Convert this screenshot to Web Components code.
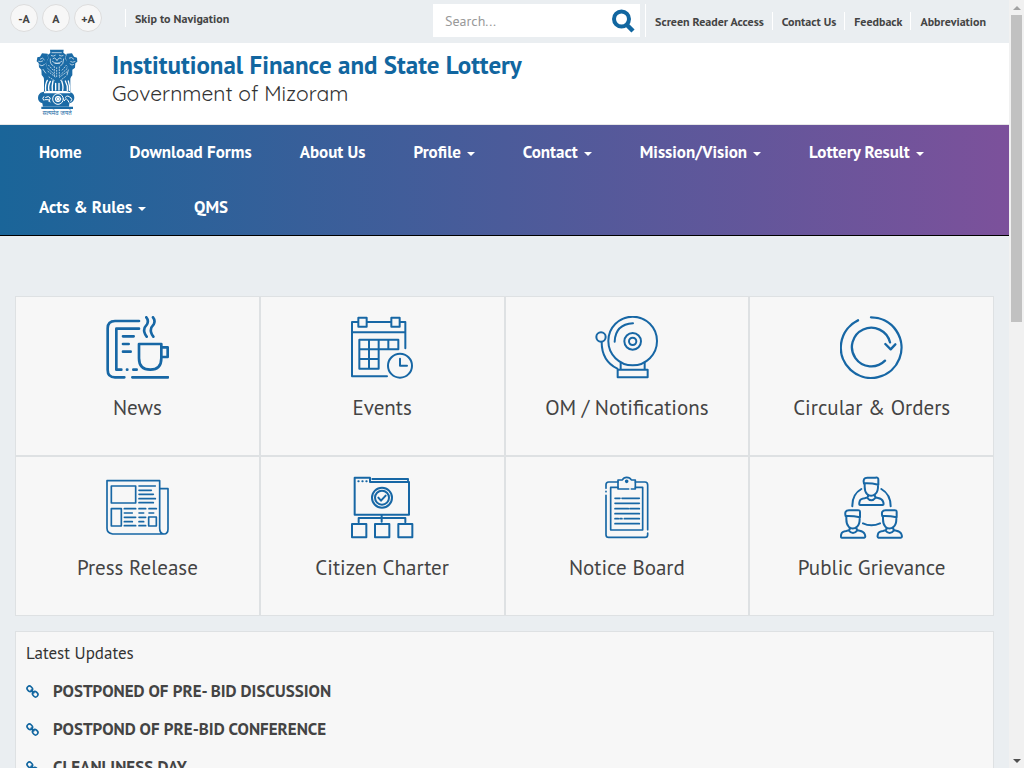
<!DOCTYPE html>
<html lang="en">
<head>
<meta charset="utf-8">
<meta name="viewport" content="width=device-width, initial-scale=1">
<title>Institutional Finance and State Lottery</title>
<style>
body{margin:0;font-family:"PT Sans",Lato,"Liberation Sans",sans-serif;color:#444;background:#eaeef1}
</style>
</head>
<body>
<site-page></site-page>
<script>
const define=(name,html,setup)=>customElements.define(name,class extends HTMLElement{
  constructor(){
    super();
    const t=document.createElement('template');
    t.innerHTML=html;
    this.attachShadow({mode:'open'}).append(t.content.cloneNode(true));
  }
  connectedCallback(){ if(setup) setup(this,this.shadowRoot); }
});

const icons={
news:['48 33 189 189',8,'<path d="M147 48H75Q53 48 53 70V195Q53 217 75 217H103M127 217H234M147 71H79V194H94M111 194h1M130 194H140M99 94h32M99 117h17M99 140h23M147 117H214V160Q214 194 181 194Q147 194 147 160ZM214 127H233V156H214M169 37Q177 47 171 58Q160 69 163 81Q165 89 170 95M189 37Q197 47 191 58Q180 69 183 81Q185 89 190 95"/>'],
events:['48 33 189 189',6,'<path d="M70 51H51V214H156M95 51H169M194 51H211V130M51 82H211M70 38H95V65H70ZM169 38H194V65H169ZM73 104H190V133H73ZM73 133V191H131V104M73 162H131M102 104V191M160 104V133"/><circle cx="195" cy="182" r="36"/><path d="M195 161V182H216"/>'],
bell:['46 33 189 189',6,'<circle cx="159" cy="108" r="73"/><circle cx="159" cy="109" r="25"/><circle cx="159" cy="109" r="11"/><circle cx="64" cy="96" r="14"/><path d="M105 110Q107 58 160 55M66 111Q66 168 113 191M123 173V193M195 173V193M114 194H204V217H114Z"/>'],
orders:['45 33 189 189',7,'<path d="M138 37A91 91 0 1 1 99 46M195 112A58 58 0 1 0 180 167M181 117L197 133L211 118"/>'],
press:['48 33 189 189',5,'<path d="M51 47H209V190Q209 207 222 207H68Q51 205 51 190ZM209 71H234V192Q234 207 222 207M64 63H137V114H64ZM64 131H94V183H64ZM176 156H199V183H176Z"/><path d="M147 63h49M147 76h37M147 88h43M147 101h49M147 113h43M103 131h34M103 144h24M103 157h34M103 170h24M103 182h34M147 131h20M147 144h14M147 157h20M147 170h14M147 182h20M177 131h22M177 144h14"/>'],
charter:['48 33 189 189',6,'<path d="M59 38H105V51H222V149H59ZM112 42H219V46M51 177H94V217H51ZM120 177H163V217H120ZM190 177H232V217H190ZM140 149V170M71 172V159H211V172"/><circle cx="141" cy="98" r="30"/><circle cx="141" cy="98" r="21"/><path d="M130 98L138 107L152 92M70 49h1M82 49h1M94 49h1"/>'],
board:['46 33 189 189',5,'<path d="M115 51H87Q79 51 79 59V70M79 79V80M79 91V209Q79 217 87 217H196Q204 217 204 209V204M204 194V60Q204 51 196 51H167M115 67H93V195H189V67H167"/><path d="M147 72H115V45H128Q132 37 141 37Q151 37 155 45H167V72H155"/><circle cx="141" cy="49" r="3" fill="currentColor"/><path d="M106 100h15M127 100h52M106 115h73M106 131h40M151 131h28M106 146h73M106 161h10M121 161h6M134 161h45M106 176h73"/>'],
people:['45 33 189 189',6,'<defs><g id="p"><path d="M117 56Q112 38 127 38H151Q161 36 160 45V59Q138 54 119 55V65Q119 80 126 87Q138 98 151 87Q160 80 159 59M129 90V95Q128 98 119 100Q106 101 104 109Q101 120 105 120H173Q178 120 174 109Q171 101 159 99Q149 98 149 90M126 98Q139 114 152 98"/></g></defs><use href="#p"/><use href="#p" x="-55" y="98"/><use href="#p" x="55" y="98"/><path d="M109 72Q81 88 82 124M169 72Q197 88 197 124M114 175Q139 187 165 175"/>']
};

define('icon-mark',`<style>:host{display:block;width:63px;height:63px;color:#1767a5}svg{display:block;width:100%;height:100%}</style><svg fill="none" stroke="currentColor" stroke-linecap="round" stroke-linejoin="round" aria-hidden="true"></svg>`,(el,r)=>{
  const [box,w,body]=icons[el.getAttribute('name')],s=r.querySelector('svg');
  s.setAttribute('viewBox',box);s.setAttribute('stroke-width',w);s.innerHTML=body;
});

define('size-button',`<style>:host{display:block}button{width:28px;height:28px;padding:2px 0 0;border:1px solid #ddd;border-radius:50%;background:#f7f7f7;color:#444;font:bold 12px/16px "PT Sans",Lato,sans-serif}</style><button type="button"><slot></slot></button>`);

define('top-link',`<style>:host{display:block;height:18px;border-left:1px solid #fff;padding:0 8px 0 9px;font-size:12px;line-height:20px;font-weight:bold}a{color:#444;text-decoration:none;white-space:nowrap}</style><a href="#"><slot></slot></a>`);

define('search-box',`<style>:host{display:block;width:207px}form{display:flex;align-items:center;height:33px;background:#fff;padding:0 5px 0 12px}input{flex:1;min-width:0;border:0;padding:0;background:none;outline:0;font:14px/20px "PT Sans",Lato,sans-serif;color:#444}input::placeholder{color:#999;opacity:1}button{border:0;background:none;padding:0;width:24px;height:24px}svg{display:block}</style>
<form role="search"><input type="text" placeholder="Search..." aria-label="Search"><button type="button" aria-label="Search"><svg width="24" height="24" viewBox="0 0 24 24" fill="none" stroke="#1166a0"><circle cx="10.5" cy="10" r="7.5" stroke-width="4"/><path d="M16 16l6 6" stroke-width="4.5"/></svg></button></form>`);

define('top-bar',`<style>:host{display:flex;align-items:flex-start;justify-content:space-between;background:#eaeef1;padding:4px 15px 6px 10px}.l,.r{display:flex}.l{gap:4px}.l top-link{margin:5px 0 0 19px}.r{align-items:center}.r search-box{margin-right:5px}.first{border-left:1px solid #fff;align-self:stretch}.r .n{border-left:0}</style>
<div class="l"><size-button>-A</size-button><size-button>A</size-button><size-button>+A</size-button><top-link>Skip to Navigation</top-link></div>
<div class="r"><search-box></search-box><span class="first"></span><top-link class="n">Screen Reader Access</top-link><top-link>Contact Us</top-link><top-link>Feedback</top-link><top-link>Abbreviation</top-link></div>`);

define('state-emblem',`<style>:host{display:block;width:42px;height:67px}svg{display:block}</style>
<svg width="42" height="67" viewBox="0 0 126 201" role="img" aria-label="State emblem">
<g fill="#1b6ba6"><path d="M42 2H83L82 11L90 17L88 29L96 43L91 60L99 92L94 109H34L28 92L34 62L29 43L37 29L35 18L43 12ZM35 14L18 13L12 23L4 25L2 37L8 42L9 55L16 62L17 78L27 90L35 71L30 42L37 27ZM92 14L108 13L114 23L123 26L124 38L118 43L117 56L109 62L109 79L100 90L91 73L95 43L89 28Z"/>
<path d="M20 56h87l-4 36v41H24V92ZM20 129q-14 4-14 18q0 12 13 16l2 11h78l1-11q15-5 15-17q0-13-14-17l-10-3H31ZM16 173h95v7H16Z"/></g>
<g fill="none" stroke="#fff" stroke-width="2" stroke-linecap="round"><path d="M48 11h28M46 20q6 4 12-1m12 0q6 4 11 1M51 29q5-5 9 1l3 5l4-6q5-5 9 0M49 37q14 13 28 0M43 30q-2 16 8 20M83 30q0 16-9 21M57 43h14"/><path d="M13 30q7-7 12 2m-17 5q7 3 12-1m-9 12q7 6 14-1M100 27q7-5 13 3m-9 8q5 4 13 0m-15 7q6 6 11 2M21 61l8 11m68-9l-4 15"/>
<path stroke-dasharray="3 5" d="M38 49l14 15M35 58l18 16M36 67l22 17M91 49l-14 16M93 59l-18 17M92 69l-22 16M62 56v31M55 53v29M70 54v29M39 84l18 12M88 83l-17 13"/>
<path stroke-width="4" d="M34 94q-7 12-5 31M43 97q-8 15-4 28M51 96q-4 18-2 28M59 103v20M69 103v20M77 96q6 17 3 28M88 96q8 14 6 29M97 96q5 15 3 28"/>
<g stroke-width="3"><circle cx="66" cy="150" r="16"/><circle cx="66" cy="150" r="8"/><path d="M66 142v16M58 150h16M61 144l10 12M71 144l-10 12M23 143q-6 5 0 11m6-9q9-6 14 2l-4 10m-12-5h11l4 7M88 145q7-9 15 1m-18 9q4-10 10-2l4 7m5-15q7 6 1 12"/></g></g>
<text x="63" y="197" text-anchor="middle" fill="#1b6ba6" font-size="18" font-family="Noto Sans Devanagari, Noto Sans, sans-serif">सत्यमेव जयते</text></svg>`);

define('site-header',`<style>:host{display:flex;gap:34px;background:#fff;border-bottom:1px solid #e7e7e7;padding:6px 36px 8px}h1,p{margin:0}h1{font-size:25px;line-height:32px;color:#1166a0}p{font-family:Quicksand,Lato,sans-serif;font-size:21px;line-height:24px;color:#333;font-weight:400}</style>
<state-emblem></state-emblem><div><h1>Institutional Finance and State Lottery</h1><p>Government of Mizoram</p></div>`);

define('nav-item',`<style>:host{display:block}a{display:flex;align-items:center;gap:6px;padding:0 24px;font-size:17px;line-height:55px;font-weight:bold;color:#fff;text-decoration:none;white-space:nowrap}i{display:none;border:4px solid transparent;border-top-color:#fff;border-bottom:0;margin-top:3px}:host([menu]) i{display:block}</style><a href="#"><slot></slot><i></i></a>`);

define('main-nav',`<style>:host{display:block;background:linear-gradient(to right,#1a6599,#7c519b);border-bottom:1px solid #000}nav{display:flex;flex-wrap:wrap;padding:0 15px}</style>
<nav><nav-item>Home</nav-item><nav-item>Download Forms</nav-item><nav-item>About Us</nav-item><nav-item menu>Profile</nav-item><nav-item menu>Contact</nav-item><nav-item menu>Mission/Vision</nav-item><nav-item menu>Lottery Result</nav-item><nav-item menu>Acts &amp; Rules</nav-item><nav-item>QMS</nav-item></nav>`);

define('service-card',`<style>:host{display:block;background:#f7f7f7;border:1px solid #dee1e3}a{display:flex;flex-direction:column;align-items:center;gap:14px;padding:19px 0 32px;color:#444;text-decoration:none;font-size:21px;line-height:30px}</style><a href="#"><span><slot></slot></span></a>`,(el,r)=>{
  const mark=document.createElement('icon-mark');
  mark.setAttribute('name',el.getAttribute('icon'));
  r.querySelector('a').prepend(mark);
});

define('service-grid',`<style>:host{display:grid;grid-template-columns:repeat(4,minmax(0,1fr))}</style>
<service-card icon="news">News</service-card><service-card icon="events">Events</service-card><service-card icon="bell">OM / Notifications</service-card><service-card icon="orders">Circular &amp; Orders</service-card><service-card icon="press">Press Release</service-card><service-card icon="charter">Citizen Charter</service-card><service-card icon="board">Notice Board</service-card><service-card icon="people">Public Grievance</service-card>`);

define('update-item',`<style>:host{display:flex;align-items:center;gap:14px}svg{flex:none}a{font-size:17px;line-height:38px;font-weight:bold;color:#444;text-decoration:none}</style>
<svg width="13" height="13" viewBox="0 0 39 39" fill="none" stroke="#1166a0" stroke-width="5" aria-hidden="true"><rect x="3" y="4" width="17" height="14" rx="7" transform="rotate(45 11 11)"/><rect x="19" y="21" width="17" height="14" rx="7" transform="rotate(45 28 28)"/><path d="M14 14l11 11"/></svg><a href="#"><slot></slot></a>`);

define('latest-updates',`<style>:host{display:block;background:#f7f7f7;border:1px solid #dee1e3;padding:10px}h2{margin:0 0 8px;font-size:17px;line-height:22px;font-weight:normal;color:#333}</style>
<h2>Latest Updates</h2><update-item>POSTPONED OF PRE- BID DISCUSSION</update-item><update-item>POSTPOND OF PRE-BID CONFERENCE</update-item><update-item>CLEANLINESS DAY</update-item>`);

define('scroll-rail',`<style>:host{display:flex;flex-direction:column;width:15px;background:#f1f1f1;align-items:center}i{border:4px solid transparent;margin:0 0 5px}.up{border-top:0;border-bottom-color:#a3a3a3;margin-top:6px}.down{border-bottom:0;border-top-color:#505050;margin-top:auto}b{width:11px;height:40%;background:#c1c1c1}</style><i class="up"></i><b></b><i class="down"></i>`);

define('site-page',`<style>:host{display:flex;height:100vh}.pane{flex:1;min-width:0;overflow-y:auto;scrollbar-width:none}main{display:flex;flex-direction:column;gap:15px;padding:60px 15px 15px}</style>
<div class="pane"><top-bar></top-bar><site-header></site-header><main-nav></main-nav><main><service-grid></service-grid><latest-updates></latest-updates></main></div><scroll-rail aria-hidden="true"></scroll-rail>`);
</script>
</body>
</html>
